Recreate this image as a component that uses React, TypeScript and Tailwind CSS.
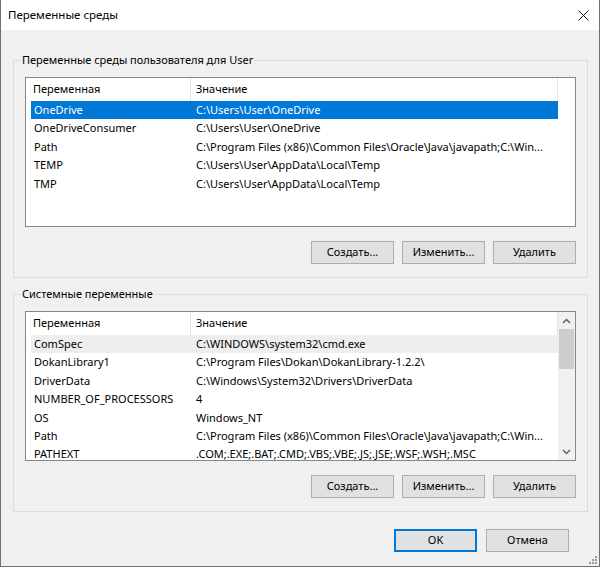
import React from 'react';

type Row = { name: string; value: string; sel?: 'active' | 'idle' };

const userVars: Row[] = [
  { name: 'OneDrive', value: 'C:\\Users\\User\\OneDrive', sel: 'active' },
  { name: 'OneDriveConsumer', value: 'C:\\Users\\User\\OneDrive' },
  { name: 'Path', value: 'C:\\Program Files (x86)\\Common Files\\Oracle\\Java\\javapath;C:\\Win...' },
  { name: 'TEMP', value: 'C:\\Users\\User\\AppData\\Local\\Temp' },
  { name: 'TMP', value: 'C:\\Users\\User\\AppData\\Local\\Temp' },
];

const systemVars: Row[] = [
  { name: 'ComSpec', value: 'C:\\WINDOWS\\system32\\cmd.exe', sel: 'idle' },
  { name: 'DokanLibrary1', value: 'C:\\Program Files\\Dokan\\DokanLibrary-1.2.2\\' },
  { name: 'DriverData', value: 'C:\\Windows\\System32\\Drivers\\DriverData' },
  { name: 'NUMBER_OF_PROCESSORS', value: '4' },
  { name: 'OS', value: 'Windows_NT' },
  { name: 'Path', value: 'C:\\Program Files (x86)\\Common Files\\Oracle\\Java\\javapath;C:\\Win...' },
  { name: 'PATHEXT', value: '.COM;.EXE;.BAT;.CMD;.VBS;.VBE;.JS;.JSE;.WSF;.WSH;.MSC' },
];

const WinButton = ({ label, primary }: { label: string; primary?: boolean }) => (
  <button
    type="button"
    className={`flex h-[23px] w-[83px] items-center justify-center bg-[#e1e1e1] text-[11px] text-black ${
      primary ? 'border-2 border-[#0078d7]' : 'border border-[#adadad]'
    }`}
  >
    {label}
  </button>
);

const Chevron = ({ up }: { up?: boolean }) => (
  <svg width="9" height="6" viewBox="0 0 9 6">
    <path d={up ? 'M1 5 L4.5 1.5 L8 5' : 'M1 1 L4.5 4.5 L8 1'} fill="none" stroke="#606060" strokeWidth="1.5" />
  </svg>
);

const Scrollbar = () => (
  <div className="flex w-[17px] flex-col bg-[#f0f0f0]">
    <div className="flex h-[17px] items-center justify-center">
      <Chevron up />
    </div>
    <div className="mx-[1px] h-[40px] bg-[#cdcdcd]" />
    <div className="flex-1" />
    <div className="flex h-[17px] items-center justify-center">
      <Chevron />
    </div>
  </div>
);

const VarList = ({ rows, scroll }: { rows: Row[]; scroll?: boolean }) => (
  <div className="flex h-[150px] w-[551px] overflow-hidden border border-[#828790] bg-white">
    <div className="flex w-[532px] flex-col">
      <div className="flex h-[23px] shrink-0">
        <div className="flex w-[165px] items-center border-r border-[#e5e5e5] pl-[7px]">Переменная</div>
        <div className="flex w-[367px] items-center border-r border-[#e5e5e5] pl-[5px]">Значение</div>
      </div>
      {rows.map((r) => (
        <div
          key={r.name}
          className={`ml-[5px] flex h-[18.4px] w-[527px] shrink-0 items-center ${
            r.sel === 'active' ? 'bg-[#0078d7] text-white' : r.sel === 'idle' ? 'bg-[#eeeeee]' : ''
          }`}
        >
          <div className="w-[159px] overflow-hidden whitespace-nowrap pl-[3px]">{r.name}</div>
          <div className="flex-1 overflow-hidden whitespace-nowrap pl-[6px]">{r.value}</div>
        </div>
      ))}
    </div>
    {scroll && <Scrollbar />}
  </div>
);

const GroupBox = ({ title, children, className = '' }: { title: string; children: React.ReactNode; className?: string }) => (
  <div className={`relative w-[575px] border border-[#dcdcdc] px-[11px] pt-[16px] pb-[13px] ${className}`}>
    <span className="absolute -top-[9px] left-[7px] bg-[#f0f0f0] px-[1px] leading-[16px]">{title}</span>
    {children}
  </div>
);

const Buttons = () => (
  <div className="mt-[14px] flex justify-end gap-[8px]">
    <WinButton label="Создать..." />
    <WinButton label="Изменить..." />
    <WinButton label="Удалить" />
  </div>
);

export default function App() {
  return (
    <div className="relative flex h-[567px] w-[600px] flex-col border-x border-b border-[#6f6f6f] bg-[#f0f0f0] font-['Noto_Sans',sans-serif] text-[11px] text-black">
      <div className="flex h-[30px] shrink-0 items-center justify-between bg-white pl-[7px] pr-[10px]">
        <span className="text-[11.5px]">Переменные среды</span>
        <svg width="11" height="11" viewBox="0 0 11 11">
          <path d="M0.5 0.5 L10.5 10.5 M10.5 0.5 L0.5 10.5" stroke="#111" strokeWidth="1" />
        </svg>
      </div>

      <div className="flex flex-col px-[12px] pt-[30px]">
        <GroupBox title="Переменные среды пользователя для User">
          <VarList rows={userVars} />
          <Buttons />
        </GroupBox>

        <GroupBox title="Системные переменные" className="mt-[16px]">
          <VarList rows={systemVars} scroll />
          <Buttons />
        </GroupBox>

        <div className="mt-[17px] flex justify-end gap-[9px] pr-[18px]">
          <WinButton label="OK" primary />
          <WinButton label="Отмена" />
        </div>
      </div>

      <svg className="absolute bottom-[1px] right-[1px]" width="10" height="10" viewBox="0 0 10 10">
        <g fill="#9a9a9a">
          <rect x="7" y="1" width="2" height="2" />
          <rect x="4" y="4" width="2" height="2" />
          <rect x="7" y="4" width="2" height="2" />
          <rect x="1" y="7" width="2" height="2" />
          <rect x="4" y="7" width="2" height="2" />
          <rect x="7" y="7" width="2" height="2" />
        </g>
      </svg>
    </div>
  );
}
